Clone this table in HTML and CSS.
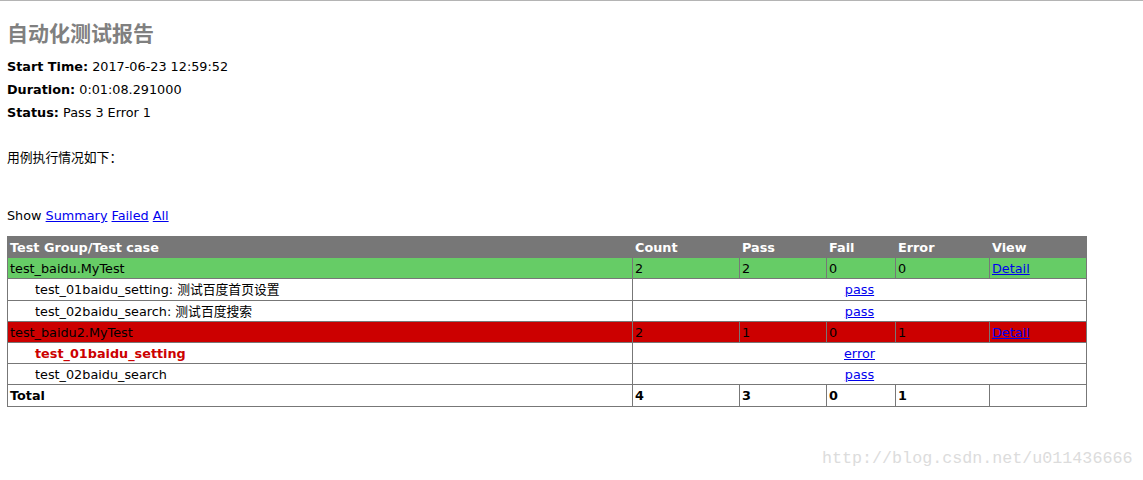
FILE: index.html
```html
<!DOCTYPE html>
<html>
<head>
<meta charset="utf-8">
<title>自动化测试报告</title>
<link rel="stylesheet" href="styles.css">
</head>
<body>
<div class="heading">
  <h1>自动化测试报告</h1>
  <p class="attribute"><strong>Start Time:</strong> 2017-06-23 12:59:52</p>
  <p class="attribute"><strong>Duration:</strong> 0:01:08.291000</p>
  <p class="attribute"><strong>Status:</strong> Pass 3 Error 1</p>
  <p class="description">用例执行情况如下：</p>
</div>
<p id="show_detail_line">Show <a href="#">Summary</a> <a href="#">Failed</a> <a href="#">All</a></p>
<table id="result_table">
  <colgroup>
    <col class="c1"><col class="c2"><col class="c3"><col class="c4"><col class="c5"><col class="c6">
  </colgroup>
  <tr id="header_row">
    <td>Test Group/Test case</td><td>Count</td><td>Pass</td><td>Fail</td><td>Error</td><td>View</td>
  </tr>
  <tr class="passClass">
    <td>test_baidu.MyTest</td><td>2</td><td>2</td><td>0</td><td>0</td><td><a href="#">Detail</a></td>
  </tr>
  <tr>
    <td class="none"><div class="testcase">test_01baidu_setting: 测试百度首页设置</div></td>
    <td colspan="5" class="center"><a href="#">pass</a></td>
  </tr>
  <tr>
    <td class="none"><div class="testcase">test_02baidu_search: 测试百度搜索</div></td>
    <td colspan="5" class="center"><a href="#">pass</a></td>
  </tr>
  <tr class="errorClass">
    <td>test_baidu2.MyTest</td><td>2</td><td>1</td><td>0</td><td>1</td><td><a href="#">Detail</a></td>
  </tr>
  <tr>
    <td class="none"><div class="testcase errorCase">test_01baidu_setting</div></td>
    <td colspan="5" class="center"><a href="#">error</a></td>
  </tr>
  <tr>
    <td class="none"><div class="testcase">test_02baidu_search</div></td>
    <td colspan="5" class="center"><a href="#">pass</a></td>
  </tr>
  <tr id="total_row">
    <td>Total</td><td>4</td><td>3</td><td>0</td><td>1</td><td>&nbsp;</td>
  </tr>
</table>
<div class="watermark">http://blog.csdn.net/u011436666</div>
</body>
</html>
```

FILE: styles.css
```css
html { border-top: 1px solid #b4b4b4; }
body {
  margin: 0 7px;
  font-family: "DejaVu Sans", Verdana, "Noto Sans CJK SC", sans-serif;
  font-size: 12.8px;
  color: #000;
  background: #fff;
}
a { color: #0000ee; text-decoration: underline; }
h1 {
  font-size: 21px;
  color: #808080;
  font-family: "Noto Sans CJK SC", sans-serif;
  font-weight: bold;
  margin: 0;
  padding-top: 16px;
  line-height: 30px;
}
.heading p { margin: 0; }
.heading .attribute { margin-top: 8px; line-height: 15px; }
.heading .attribute:first-of-type { margin-top: 12px; }
.heading .description { margin-top: 29px; line-height: 15px; font-family: "Noto Sans CJK SC", sans-serif; }
#show_detail_line { margin: 44px 0 13px; line-height: 15px; }
#result_table {
  width: 1080px;
  border-collapse: collapse;
  border: 1px solid #777;
}
#result_table td {
  border: 1px solid #777;
  padding: 3px 2px 1px;
  line-height: 16.2px;
  font-size: 12.8px;
}
col.c1 { width: 625px; }
col.c2 { width: 107px; }
col.c3 { width: 87px; }
col.c4 { width: 69px; }
col.c5 { width: 94px; }
col.c6 { width: 97px; }
#header_row { font-weight: bold; color: #fff; background-color: #777; }
#total_row { font-weight: bold; }
.passClass { background-color: #6c6; }
.errorClass { background-color: #c00; }
.errorCase { color: #c00; font-weight: bold; }
.testcase { margin-left: 25px; }
.center { text-align: center; }
.watermark {
  position: absolute;
  left: 822px;
  top: 449px;
  font-family: "Liberation Mono", monospace;
  font-size: 16.7px;
  color: #dcdcdc;
  white-space: nowrap;
}
```
